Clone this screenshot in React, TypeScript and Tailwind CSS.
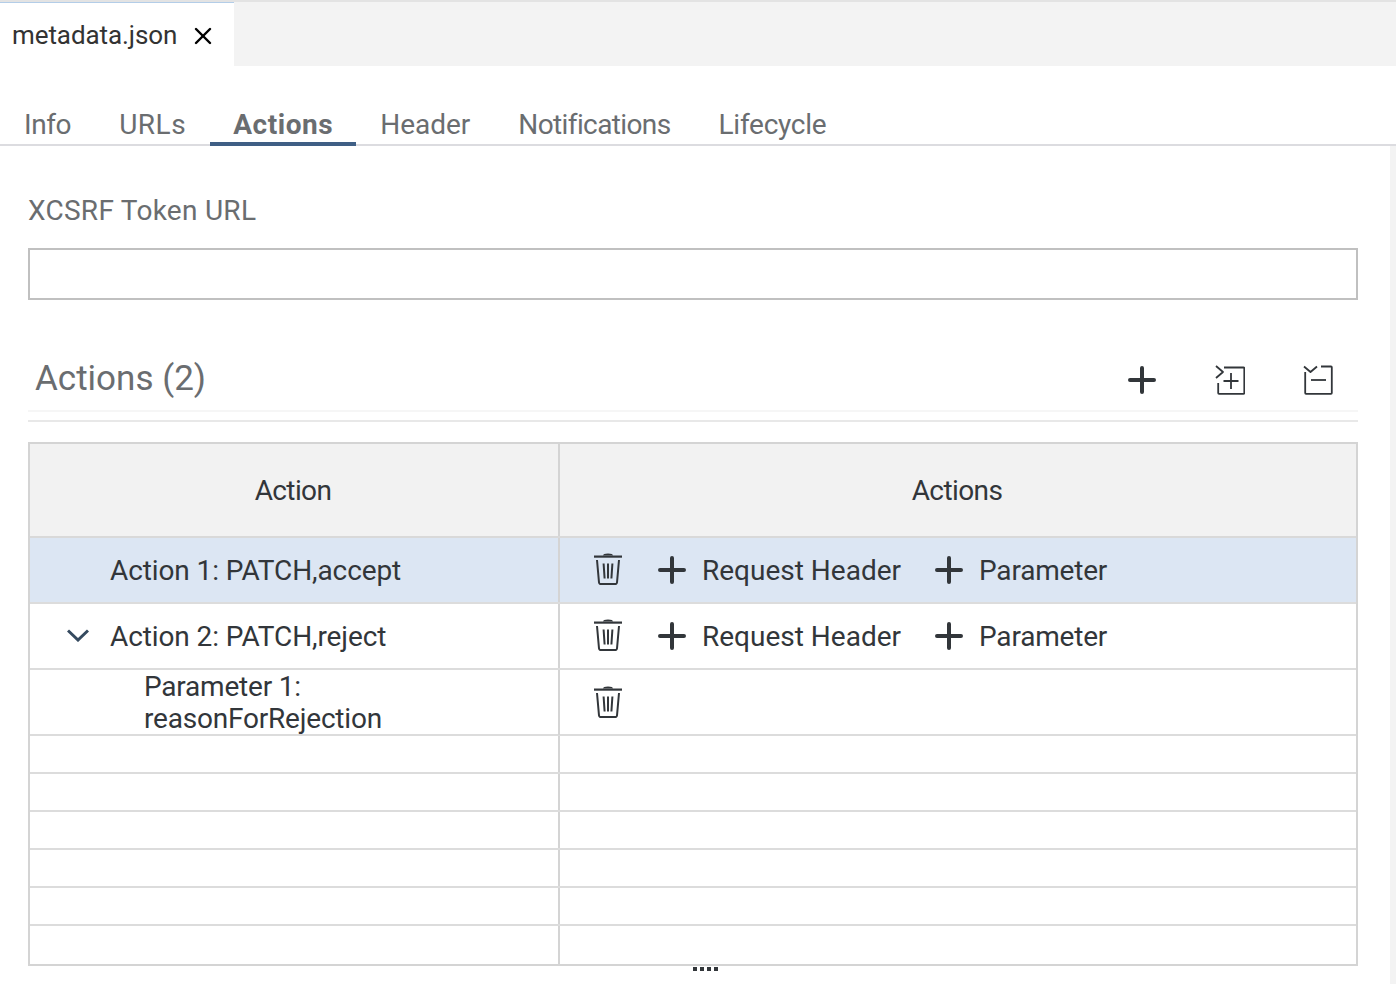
import { X } from 'lucide-react';

const tabs = [
  { label: 'Info', track: 'tracking-[-0.4px]' },
  { label: 'URLs', track: 'tracking-[0.5px]' },
  { label: 'Actions', track: 'tracking-[0.55px] pl-[23px] pr-[23px]' },
  { label: 'Header', track: 'tracking-[0px]' },
  { label: 'Notifications', track: 'tracking-[-0.62px]' },
  { label: 'Lifecycle', track: 'tracking-[-0.25px]' },
];

function PlusIcon({ className = '' }: { className?: string }) {
  return (
    <svg viewBox="0 0 28 28" className={`w-7 h-7 text-[#32363a] ${className}`} fill="none" stroke="currentColor" strokeWidth="4" strokeLinecap="round">
      <path d="M14 2v24M2 14h24" />
    </svg>
  );
}

function TrashIcon() {
  return (
    <svg viewBox="0 0 28 32" className="w-7 h-8 -mt-[2px] text-[#32363a]" fill="none" stroke="currentColor" strokeWidth="2">
      <path d="M0 3.6h28" strokeWidth="2.2" />
      <path d="M10 2.6c0-1.6 8-1.6 8 0" strokeWidth="2" />
      <path d="M3 7l2 22.5c.1 1 .8 1.6 1.8 1.6h14.4c1 0 1.7-.6 1.8-1.6L25 7" strokeLinejoin="round" />
      <path d="M9.6 10.5l1 15M14 10.500v15M18.4 10.5l-1 15" />
    </svg>
  );
}

function ExpandAllIcon() {
  return (
    <svg viewBox="0 0 30 30" className="w-[30px] h-[30px] text-[#32363a]" fill="none" stroke="currentColor" strokeWidth="1.8" strokeLinejoin="round">
      <path d="M1 1l7 6-7 6" />
      <path d="M9 2.5h19.5c.5 0 .8.3.8.8V28c0 .5-.3.8-.8.8H4c-.5 0-.8-.3-.8-.8v-10" />
      <path d="M16 8v16M8.500 16h15" />
    </svg>
  );
}

function CollapseAllIcon() {
  return (
    <svg viewBox="0 0 30 30" className="w-[30px] h-[30px] text-[#32363a]" fill="none" stroke="currentColor" strokeWidth="1.8" strokeLinejoin="round">
      <path d="M1 1.500l6.500 5.500 6.500-5.500" />
      <path d="M18 1.500h10c.5 0 .8.3.8.8V28c0 .5-.3.8-.8.8H3c-.5 0-.8-.3-.8-.8V7" />
      <path d="M8 15h15" />
    </svg>
  );
}

function Chevron() {
  return (
    <svg viewBox="0 0 22 13" className="w-[22px] h-[13px] mb-[2px] text-[#354a5f]" fill="none" stroke="currentColor" strokeWidth="3">
      <path d="M1 1.500l10 9.500 10-9.500" />
    </svg>
  );
}

function RowActions() {
  return (
    <div className="flex items-center pl-[34px]">
      <TrashIcon />
      <PlusIcon className="ml-9" />
      <span className="ml-[16px] pt-[2px]">Request Header</span>
      <PlusIcon className="ml-[34px]" />
      <span className="ml-[16px] pt-[2px] tracking-[-0.2px]">Parameter</span>
    </div>
  );
}

export default function App() {
  return (
    <div className="w-[1396px] h-[984px] overflow-hidden bg-white font-['Roboto',sans-serif] text-[#32363a]">
      {/* Editor tab strip */}
      <div className="h-[66px] bg-[#f3f3f3] border-t-2 border-[#e3e3e3] flex">
        <div className="w-[234px] h-[64px] bg-white border-t border-[#b3cde8] flex items-center pl-3 pt-[2px]">
          <span className="text-[26px] tracking-[-0.08px] text-[#333333]">metadata.json</span>
          <X className="ml-[12px] w-7 h-7 text-black" strokeWidth={2.1} />
        </div>
      </div>

      {/* Section tabs */}
      <div className="h-[80px] border-b-2 border-[#dcdce0] flex items-end">
        {tabs.map((tab) => (
          <div
            key={tab.label}
            className={`h-[42px] -mb-[2px] pt-[3px] text-[28px] leading-[36px] text-[#6a6d70] ${tab.track} ${
              tab.label === 'Actions' ? 'font-bold border-b-4 border-[#3f5f85]' : 'px-6'
            }`}
          >
            {tab.label}
          </div>
        ))}
      </div>

      <div className="flex">
        <div className="w-[1358px] pl-7">
          <div className="mt-[45px] text-[28px] leading-[40px] tracking-[0.27px] text-[#6a6d70]">XCSRF Token URL</div>
          <div className="mt-[17px] h-[52px] border-2 border-[#c0c0c0]" />

          {/* Actions toolbar */}
          <div className="mt-[40px] h-[72px] pl-2 flex items-center border-b-2 border-[#f6f6f6]">
            <span className="text-[35px] text-[#6a6d70] mt-[8px] -ml-px">Actions (2)</span>
            <div className="ml-auto mt-[10px] flex items-center gap-[58px] pr-[25px]">
              <PlusIcon className="mr-px" />
              <ExpandAllIcon />
              <CollapseAllIcon />
            </div>
          </div>
          <div className="mt-[8px] h-[2px] bg-[#e8e8e8]" />

          {/* Tree table */}
          <div className="mt-[20px] border-2 border-[#d4d4d4] text-[28px]">
            <div className="grid grid-cols-[530px_1fr] h-[94px] bg-[#f2f2f2] border-b-2 border-[#d9d9d9] text-center">
              <div className="flex items-center justify-center border-r-2 border-[#d4d4d4] pt-[2px] pr-[2px] tracking-[-0.6px]">Action</div>
              <div className="flex items-center justify-center pt-[2px] pr-[2px] tracking-[-0.6px]">Actions</div>
            </div>
            <div className="grid grid-cols-[530px_1fr] h-[66px] bg-[#dce6f3] border-b-2 border-[#dcdcdc]">
              <div className="flex items-center border-r-2 border-[#d4d4d4] pl-20 pt-[2px] tracking-[-0.1px]">Action 1: PATCH,accept</div>
              <RowActions />
            </div>
            <div className="grid grid-cols-[530px_1fr] h-[66px] border-b-2 border-[#dcdcdc]">
              <div className="flex items-center border-r-2 border-[#d4d4d4] pl-[37px]">
                <Chevron />
                <span className="ml-[21px] pt-[2px] tracking-[-0.1px]">Action 2: PATCH,reject</span>
              </div>
              <RowActions />
            </div>
            <div className="grid grid-cols-[530px_1fr] h-[66px] border-b-2 border-[#dcdcdc]">
              <div className="flex items-center border-r-2 border-[#d4d4d4] pl-[114px] leading-[32px]">
                <span className="pt-px tracking-[-0.2px]">
                  Parameter 1:
                  <br />
                  reasonForRejection
                </span>
              </div>
              <div className="flex items-center pl-[34px]">
                <TrashIcon />
              </div>
            </div>
            {[0, 1, 2, 3, 4].map((i) => (
              <div key={i} className="grid grid-cols-[530px_1fr] h-[38px] border-b-2 border-[#dcdcdc]">
                <div className="border-r-2 border-[#d4d4d4]" />
                <div />
              </div>
            ))}
            <div className="grid grid-cols-[530px_1fr] h-[38px]">
              <div className="border-r-2 border-[#d4d4d4]" />
              <div />
            </div>
          </div>

          {/* Resize handle */}
          <div className="mt-px ml-[665px] flex gap-[3px]">
            {[0, 1, 2, 3].map((i) => (
              <div key={i} className="w-1 h-1 bg-[#32363a]" />
            ))}
          </div>
        </div>
        <div className="ml-auto w-[6px] h-[838px] bg-[#f3f3f3]" />
      </div>
    </div>
  );
}
